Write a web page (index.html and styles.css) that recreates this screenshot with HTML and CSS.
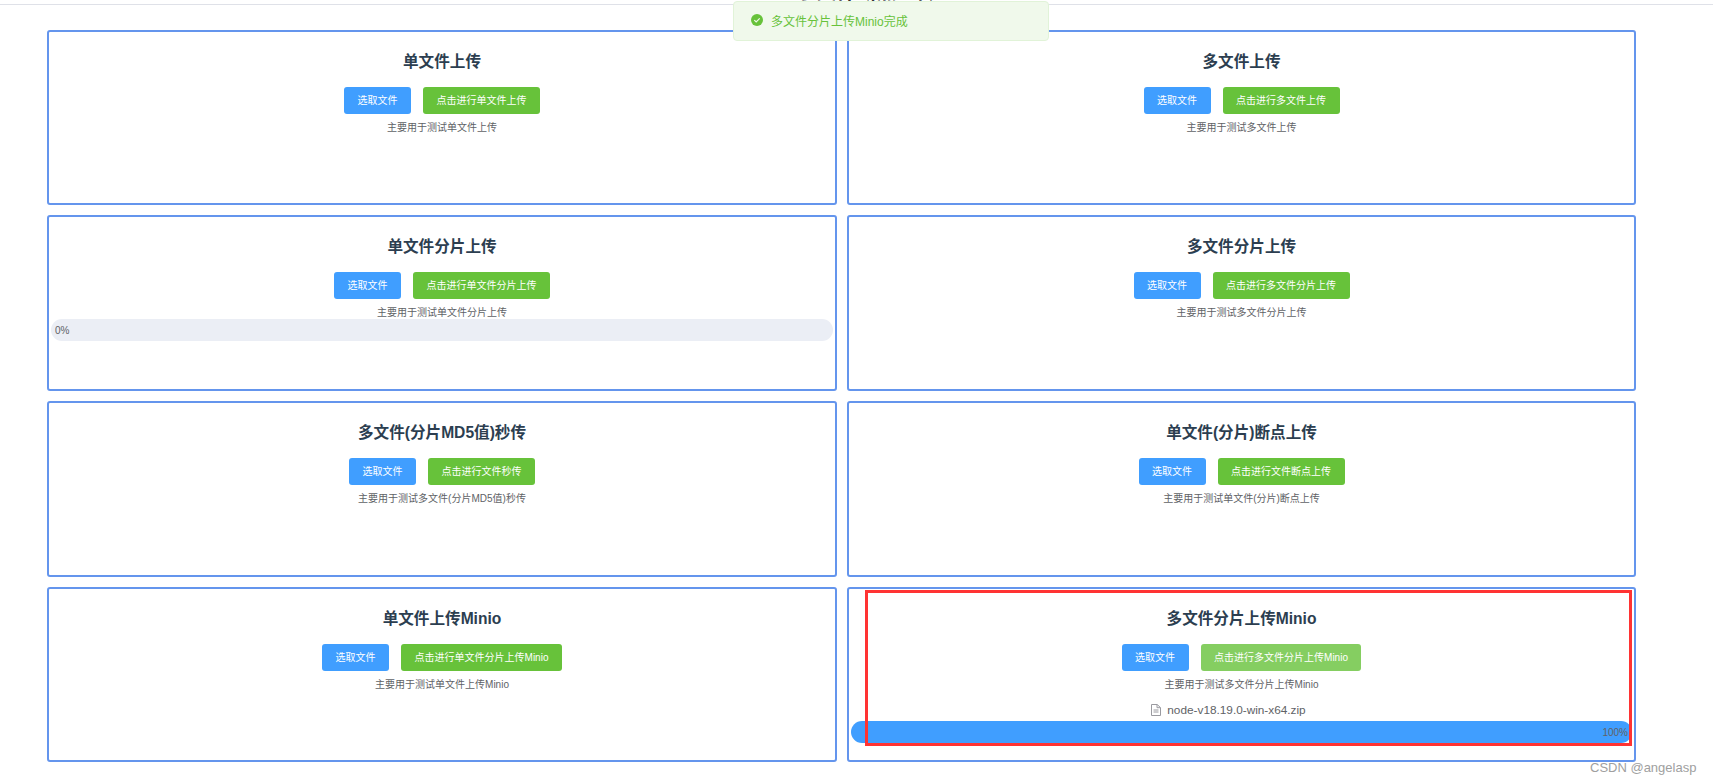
FILE: index.html
```html
<!DOCTYPE html>
<html lang="zh-CN">
<head>
<meta charset="utf-8">
<title>文件上传</title>
<link rel="stylesheet" href="styles.css">
</head>
<body>
<header class="topbar"><h1 class="page-title">基于文件断点上传</h1></header>
<main class="grid">
  <section class="card">
    <h3 class="card-title">单文件上传</h3>
    <div class="actions"><button class="btn btn-blue">选取文件</button><button class="btn btn-green">点击进行单文件上传</button></div>
    <p class="tip">主要用于测试单文件上传</p>
  </section>
  <section class="card">
    <h3 class="card-title">多文件上传</h3>
    <div class="actions"><button class="btn btn-blue">选取文件</button><button class="btn btn-green">点击进行多文件上传</button></div>
    <p class="tip">主要用于测试多文件上传</p>
  </section>
  <section class="card">
    <h3 class="card-title">单文件分片上传</h3>
    <div class="actions"><button class="btn btn-blue">选取文件</button><button class="btn btn-green">点击进行单文件分片上传</button></div>
    <p class="tip">主要用于测试单文件分片上传</p>
    <div class="bar"><span class="bar-text">0%</span></div>
  </section>
  <section class="card">
    <h3 class="card-title">多文件分片上传</h3>
    <div class="actions"><button class="btn btn-blue">选取文件</button><button class="btn btn-green">点击进行多文件分片上传</button></div>
    <p class="tip">主要用于测试多文件分片上传</p>
  </section>
  <section class="card">
    <h3 class="card-title">多文件(分片MD5值)秒传</h3>
    <div class="actions"><button class="btn btn-blue">选取文件</button><button class="btn btn-green">点击进行文件秒传</button></div>
    <p class="tip">主要用于测试多文件(分片MD5值)秒传</p>
  </section>
  <section class="card">
    <h3 class="card-title">单文件(分片)断点上传</h3>
    <div class="actions"><button class="btn btn-blue">选取文件</button><button class="btn btn-green">点击进行文件断点上传</button></div>
    <p class="tip">主要用于测试单文件(分片)断点上传</p>
  </section>
  <section class="card">
    <h3 class="card-title">单文件上传Minio</h3>
    <div class="actions"><button class="btn btn-blue">选取文件</button><button class="btn btn-green">点击进行单文件分片上传Minio</button></div>
    <p class="tip">主要用于测试单文件上传Minio</p>
  </section>
  <section class="card">
    <h3 class="card-title">多文件分片上传Minio</h3>
    <div class="actions"><button class="btn btn-blue">选取文件</button><button class="btn btn-green btn-light">点击进行多文件分片上传Minio</button></div>
    <p class="tip">主要用于测试多文件分片上传Minio</p>
    <div class="file">
      <svg class="file-icon" width="10" height="12" viewBox="0 0 10 12" aria-hidden="true"><path d="M1 .5h5.2L9.5 3.6v7.9H.5V.5z M6 .7v3h3.3 M2.5 6h5 M2.5 8h5" fill="none" stroke="#9a9aa0" stroke-width="1"/></svg>
      <span>node-v18.19.0-win-x64.zip</span>
    </div>
    <div class="bar bar-full"><span class="bar-text">100%</span></div>
  </section>
</main>
<div class="toast">
  <svg class="toast-icon" width="12" height="12" viewBox="0 0 12 12" aria-hidden="true"><circle cx="6" cy="6" r="6" fill="#67c23a"/><path d="M3.3 6.1l1.9 1.9 3.5-3.6" fill="none" stroke="#f0f9eb" stroke-width="1.2"/></svg>
  <span>多文件分片上传Minio完成</span>
</div>
<div class="annotation"></div>
<div class="watermark">CSDN @angelasp</div>
</body>
</html>
```

FILE: styles.css
```css
* {
  box-sizing: border-box;
}

html,
body {
  height: 100%;
}

body {
  margin: 0;
  overflow: hidden;
  background: #fff;
  color: #2c3e50;
  font-family: "Liberation Sans", "Noto Sans CJK SC", sans-serif;
}

.topbar {
  display: flex;
  justify-content: center;
  height: 5px;
  overflow: hidden;
  border-bottom: 1px solid #dfe1e8;
}

.page-title {
  flex: none;
  width: 160px;
  margin: -18px 0 0;
  font-size: 20px;
  line-height: 20px;
  text-align: center;
  color: #303133;
}

.grid {
  display: grid;
  grid-template-columns: 790px 789px;
  grid-template-rows: 175px 176px 176px 175px;
  gap: 10px;
  margin: 25px 0 0 47px;
}

.card {
  display: flex;
  flex-direction: column;
  align-items: center;
  padding: 20px 2px 0;
  border: 2px solid #6495ed;
  border-radius: 3px;
}

.card-title {
  margin: 0 0 15px;
  font-size: 15.6px;
  line-height: 20px;
  font-weight: 700;
}

.actions {
  display: flex;
  gap: 12px;
}

.btn {
  height: 27px;
  padding: 0 13.5px;
  border: 0;
  border-radius: 3px;
  color: #fff;
  font: inherit;
  font-size: 10px;
  line-height: 27px;
}

.btn-blue {
  background: #409eff;
}

.btn-green {
  background: #67c23a;
}

.btn-light {
  background: #85ce61;
}

.tip {
  margin: 8px 0 0;
  color: #606266;
  font-size: 10px;
  line-height: 12px;
}

.bar {
  display: flex;
  align-items: center;
  align-self: stretch;
  height: 22px;
  padding: 0 4px;
  border-radius: 11px;
  background: #ebeef5;
  color: #606266;
  font-size: 10px;
}

.bar-full {
  justify-content: flex-end;
  margin-top: 3px;
  background: #409eff;
}

.file {
  display: flex;
  align-items: center;
  gap: 6px;
  height: 16px;
  margin: 11px 26px 0 0;
  color: #606266;
  font-size: 11.8px;
  line-height: 16px;
}

.toast {
  position: absolute;
  top: 1px;
  left: 733px;
  display: flex;
  align-items: center;
  gap: 8px;
  width: 316px;
  height: 40px;
  padding: 0 0 2px 17px;
  border: 1px solid #e1f3d8;
  border-radius: 4px;
  background: #f0f9eb;
  color: #67c23a;
  font-size: 12px;
}

.annotation {
  position: absolute;
  top: 590px;
  left: 865px;
  width: 767px;
  height: 156px;
  border: 3px solid #f33;
}

.watermark {
  position: absolute;
  top: 760px;
  left: 1590px;
  color: #a0a0a0;
  font-size: 13px;
  line-height: 16px;
}
```
